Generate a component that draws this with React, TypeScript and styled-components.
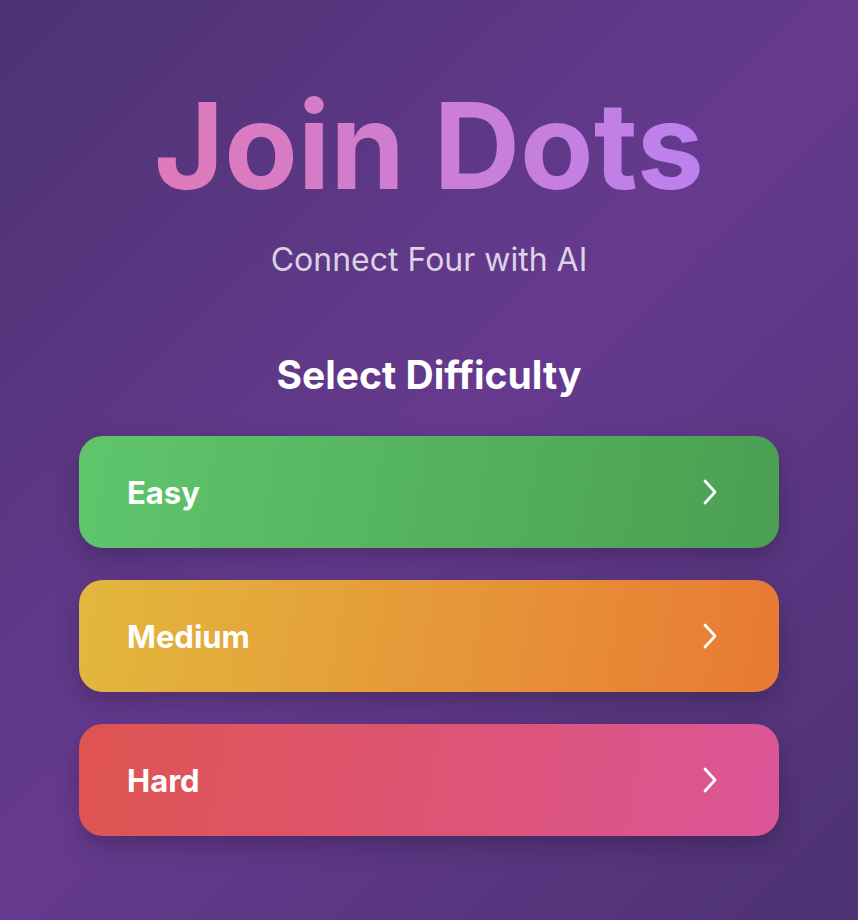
import React from 'react'
import styled, { createGlobalStyle } from 'styled-components'

type Level = {
    label: string
    from: string
    to: string
}

const levels: Level[] = [
    { label: 'Easy', from: '#5fc66c', to: '#4a9f52' },
    { label: 'Medium', from: '#e2b83d', to: '#e97934' },
    { label: 'Hard', from: '#df5450', to: '#dc5598' },
]

const Chevron = () => (
    <svg width="18" height="28" viewBox="0 0 18 28" fill="none">
        <path
            d="M4 3 L14 14 L4 25"
            stroke="#fff"
            strokeWidth="2.8"
            strokeLinecap="round"
            strokeLinejoin="round"
        />
    </svg>
)

export default function App() {
    return (
        <>
            <GlobalStyle />
            <Page>
                <Title>Join Dots</Title>
                <Subtitle>Connect Four with AI</Subtitle>
                <Heading>Select Difficulty</Heading>
                <List>
                    {levels.map(level => (
                        <LevelButton key={level.label} from={level.from} to={level.to}>
                            <span>{level.label}</span>
                            <Chevron />
                        </LevelButton>
                    ))}
                </List>
            </Page>
        </>
    )
}

const GlobalStyle = createGlobalStyle`
    html, body {
        margin: 0;
        padding: 0;
    }
    body {
        font-family: Inter, 'Noto Sans', sans-serif;
    }
`

const Page = styled.div`
    min-height: 100vh;
    box-sizing: border-box;
    display: flex;
    flex-direction: column;
    align-items: center;
    padding: 74px 80px 40px;
    background: linear-gradient(135deg, #4d3373 0%, #663a8f 50%, #4d3272 100%);
`

const Title = styled.h1`
    margin: 0;
    font-size: 120px;
    font-weight: 700;
    line-height: 1.2;
    background: linear-gradient(90deg, #e07ab8, #bb81ee);
    -webkit-background-clip: text;
    background-clip: text;
    color: transparent;
`

const Subtitle = styled.p`
    margin: 23px 0 0;
    font-size: 32px;
    line-height: 1.2;
    color: rgba(255, 255, 255, 0.78);
`

const Heading = styled.h2`
    margin: 73px 0 0;
    font-size: 39px;
    font-weight: 700;
    line-height: 1.2;
    color: #fff;
`

const List = styled.div`
    margin-top: 37px;
    width: 700px;
    display: flex;
    flex-direction: column;
    gap: 32px;
`

const LevelButton = styled.button<{ from: string; to: string }>`
    height: 112px;
    display: flex;
    align-items: center;
    justify-content: space-between;
    padding: 0 60px 0 48px;
    border: none;
    border-radius: 24px;
    background: linear-gradient(100deg, ${p => p.from}, ${p => p.to});
    box-shadow: 0 10px 24px rgba(0, 0, 0, 0.22);
    font-family: Inter, 'Noto Sans', sans-serif;
    font-size: 31px;
    font-weight: 700;
    color: #fff;
    cursor: pointer;
`
